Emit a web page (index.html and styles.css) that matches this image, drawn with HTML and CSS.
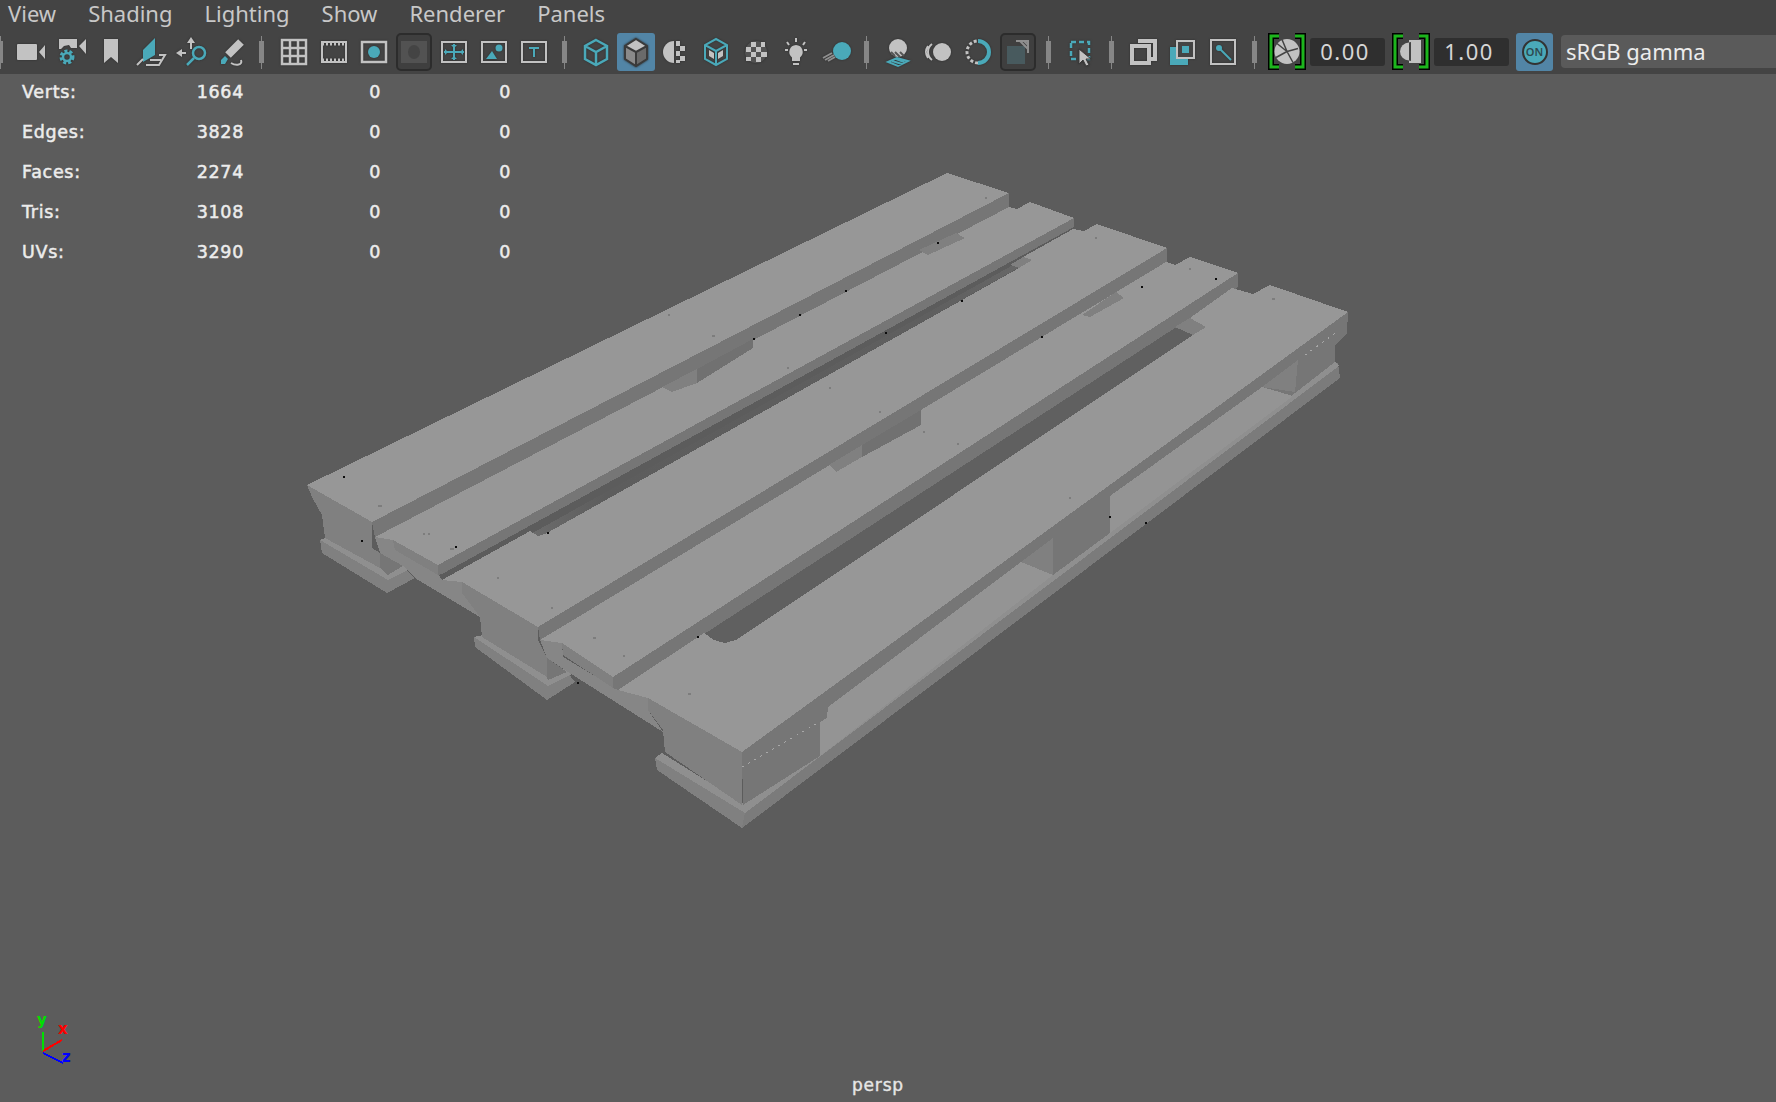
FILE: index.html
```html
<!DOCTYPE html>
<html lang="en">
<head>
    <meta charset="UTF-8">
    <title>persp</title>
    <link rel="stylesheet" href="styles.css">
</head>
<body>
    <header class="topbar">
        <nav class="menu">
            <span>View</span><span>Shading</span><span>Lighting</span><span>Show</span><span>Renderer</span><span>Panels</span>
        </nav>
        <div class="toolbar">
            <i class="sep sep-first"></i>
            <div class="group g1">
                <div class="tool"><svg viewBox="0 0 32 32"><rect class="g" x="2" y="8" width="20" height="16" rx="1"/><path class="g" d="M24 16l6-7v14z"/></svg></div>
                <div class="tool"><svg viewBox="0 0 32 32"><path class="g" d="M4 3h18v9H16l-2-3-5 1-3 3H4zM24 10l7-7v15z"/><circle class="ts gear" cx="12" cy="21" r="6"/><circle class="ts" cx="12" cy="21" r="4"/></svg></div>
                <div class="tool"><svg viewBox="0 0 32 32"><path class="g" d="M9 3h14v24l-7-6-7 6z"/></svg></div>
                <div class="tool"><svg viewBox="0 0 32 32"><path class="t" d="M8 26V14L20 2v17z"/><path class="gs thin" d="M2 29l6-6M11 29h13l6-10h-6M15 24h11"/></svg></div>
                <div class="tool"><svg viewBox="0 0 32 32"><path class="gs thin" d="M16 13V5M3 17h8"/><path class="g" d="M16 1l-4 6h8zM1 17l6-4v8z"/><circle class="ts" cx="24" cy="17" r="6"/><path class="ts" d="M19 22l-7 7"/></svg></div>
                <div class="tool"><svg viewBox="0 0 32 32"><path class="gs thick" d="M26 6L13 19"/><path class="t" d="M10 20l3 3-3 5-4 0 0-4z"/><path class="gs thin" d="M16 27c5 3 12 2 10-3"/></svg></div>
            </div>
            <i class="sep"></i>
            <div class="group g2">
                <div class="tool"><svg viewBox="0 0 32 32"><path class="gs" d="M4 4h24v24H4zM12 4v24M20 4v24M4 12h24M4 20h24"/></svg></div>
                <div class="tool"><svg viewBox="0 0 32 32"><rect class="gs thin" x="4" y="6" width="24" height="20"/><path class="gs dash" d="M4 8h24M4 24h24"/></svg></div>
                <div class="tool"><svg viewBox="0 0 32 32"><rect class="gs" x="4" y="6" width="24" height="20"/><circle class="t" cx="16" cy="16" r="6"/></svg></div>
                <div class="tool pressed"><svg viewBox="0 0 32 32"><rect class="dim" x="3" y="5" width="26" height="22"/><ellipse class="dim2" cx="16" cy="16" rx="6" ry="7"/></svg></div>
                <div class="tool"><svg viewBox="0 0 32 32"><rect class="gs thin" x="4" y="6" width="24" height="20"/><path class="ts thin" d="M16 8v16M6 16h20"/><path class="t" d="M13 9h6l-3 3zM13 23h6l-3-3zM7 13v6l3-3zM25 13v6l-3-3z"/></svg></div>
                <div class="tool"><svg viewBox="0 0 32 32"><rect class="gs thin" x="4" y="6" width="24" height="20"/><path class="t" d="M8 23l6-8 5 8z"/><circle class="t" cx="21" cy="12" r="3.5"/></svg></div>
                <div class="tool"><svg viewBox="0 0 32 32"><rect class="gs thin" x="4" y="6" width="24" height="20"/><path class="ts thin" d="M11 12h10M16 12v9"/></svg></div>
            </div>
            <i class="sep"></i>
            <div class="group g3">
                <div class="tool"><svg viewBox="0 0 32 32"><path class="ts" d="M16 4l11 6v13l-11 6-11-6V10zM5 10l11 6 11-6M16 16v13"/></svg></div>
                <div class="tool selected"><svg viewBox="0 0 32 32"><path class="cube-r" d="M16 16l11-6v13l-11 7z"/><path class="cube-l" d="M16 16L5 10v13l11 7z"/><path class="g" d="M16 3l11 7-11 6-11-6z"/><path class="outline" d="M16 3l11 7v13l-11 7-11-7V10zM5 10l11 6 11-6M16 16v14"/></svg></div>
                <div class="tool"><svg viewBox="0 0 32 32"><path class="g" d="M14 5A11 11 0 0 0 14 27z"/><path class="g" d="M16 5h4v5h-4zM20 10h5v5h-5zM16 15h4v5h-4zM20 20h5v5h-5zM16 24h4v3h-4z"/></svg></div>
                <div class="tool"><svg viewBox="0 0 32 32"><path class="ts thin" d="M16 3l11 6v14l-11 6-11-6V9zM5 9l11 6 11-6M16 15v14"/><path class="g" d="M9 14l5 3v6l-5-3zM23 14l-5 3v6l5-3z"/></svg></div>
                <div class="tool"><svg viewBox="0 0 32 32"><circle class="dim" cx="16" cy="16" r="11"/><path class="g" d="M11 6h5v5h-5zM21 6h4v5h-4zM6 11h5v5H6zM16 11h5v5h-5zM11 16h5v5h-5zM21 16h6v5h-6zM6 21h5v4H6zM16 21h5v5h-5z"/></svg></div>
                <div class="tool"><svg viewBox="0 0 32 32"><path class="g" d="M16 9a7 7 0 0 0-4 12.500V25h8v-3.500A7 7 0 0 0 16 9zM13 27h6v2h-6z"/><path class="gs thin" d="M16 2v4M5 14h3M24 14h3M7 6l2 3M25 6l-2 3"/></svg></div>
                <div class="tool"><svg viewBox="0 0 32 32"><circle class="t" cx="22" cy="15" r="9"/><path class="hatch" d="M3 22l9-5M5 24l9-5M8 25l7-4"/></svg></div>
            </div>
            <i class="sep"></i>
            <div class="group g4">
                <div class="tool"><svg viewBox="0 0 32 32"><circle class="g" cx="16" cy="12" r="9"/><path class="hatch dark" d="M9 16l4 4M13 16l5 5M18 16l4 4"/><path class="ts thin" d="M6 26l9-4 11 3-10 5zM10 25l10 3M14 23l8 3"/></svg></div>
                <div class="tool"><svg viewBox="0 0 32 32"><circle class="g" cx="20" cy="16" r="9"/><path class="gs thin" d="M10 8a10 10 0 0 0 0 16M6 10a10 10 0 0 0 0 12"/></svg></div>
                <div class="tool"><svg viewBox="0 0 32 32"><path class="ts heavy" d="M16 5a11 11 0 0 1 0 22"/><path class="gs dashed" d="M16 27a11 11 0 0 1 0-22"/></svg></div>
                <div class="tool pressed"><svg viewBox="0 0 32 32"><rect class="dim-t" x="5" y="10" width="18" height="18"/><path class="hatch" d="M14 5h12v12M18 5l8 8M22 5l4 4"/></svg></div>
            </div>
            <i class="sep"></i>
            <div class="group g5">
                <div class="tool"><svg viewBox="0 0 32 32"><path class="ts dash-box" d="M6 6h18v17H6z"/><path class="g cursor" d="M14 13l0 15 4-4 3 6 3-1-3-6h5z"/></svg></div>
            </div>
            <i class="sep"></i>
            <div class="group g6">
                <div class="tool"><svg viewBox="0 0 32 32"><path class="gs heavy" d="M11 5h17v18h-4"/><path class="gs heavy" d="M5 10h17v17H5z"/></svg></div>
                <div class="tool"><svg viewBox="0 0 32 32"><rect class="t" x="3" y="11" width="18" height="18"/><rect class="base" x="10" y="5" width="17" height="17"/><path class="gs thin" d="M10 5h17v17H10z"/><rect class="t" x="15" y="10" width="7" height="7"/></svg></div>
                <div class="tool"><svg viewBox="0 0 32 32"><rect class="gs thin" x="4" y="4" width="24" height="24"/><circle class="t" cx="12" cy="12" r="3"/><path class="ts thin" d="M13 13l11 11"/></svg></div>
            </div>
            <i class="sep sep-last"></i>
            <div class="bracket b1"><svg viewBox="0 0 38 37"><path class="green-edge" d="M11 3H3v31h8M27 3h8v31h-8"/><path class="green" d="M11 3H3v31h8M27 3h8v31h-8"/><circle class="g" cx="19" cy="18.500" r="12.500"/><path class="blades" d="M19 18.500l-5-12M19 18.500l11-3M19 18.500l6 11M19 18.500l-11 6M19 18.500l-10-8"/></svg></div>
            <div class="field">0.00</div>
            <div class="bracket b2"><svg viewBox="0 0 38 37"><path class="green-edge" d="M11 3H3v31h8M27 3h8v31h-8"/><path class="green" d="M11 3H3v31h8M27 3h8v31h-8"/><path class="g" d="M17 7h12v23H17z"/><path class="half-fill" d="M19 9a9.500 9.500 0 0 0 0 19z"/><path class="g" d="M8 18.500a9 9 0 0 1 9-9v18a9 9 0 0 1-9-9z"/></svg></div>
            <div class="field">1.00</div>
            <div class="on-button"><span class="on-disc">ON</span></div>
            <div class="space-field">sRGB gamma</div>
        </div>
    </header>

    <main class="viewport">
        <svg class="scene" viewBox="0 72 1776 1028">
            <defs>
                <linearGradient id="gapShade" gradientUnits="userSpaceOnUse" x1="530" y1="0" x2="1030" y2="0">
                    <stop offset="0" stop-color="#6c6c6c"/>
                    <stop offset="0.15" stop-color="#5d5d5d"/>
                    <stop offset="0.8" stop-color="#5f5f5f"/>
                    <stop offset="1" stop-color="#686868"/>
                </linearGradient>
            </defs>
            <!-- feet and blocks at the near end -->
            <polygon class="foot-face" points="320,540 322,553 387,593 415,578 403,567 388,574"/>
            <polygon class="foot-top" points="320,540 325,538 388,568 403,563 408,570 388,580"/>
            <polygon class="face" points="307,485 312,497 322,515 325,538 380,568 380,553 372,548 372,522"/>
            <polygon class="band" points="380,553 403,566 388,575 380,568"/>

            <polygon class="foot-face" points="474,637 475,647 547,700 575,682 567,672 548,680 483,637"/>
            <polygon class="foot-top" points="474,637 483,635 548,674 567,668 572,674 548,686"/>
            <polygon class="strip" points="375,537 393,540 395,550 439,575 442,580 462,582 463,595 480,607 480,617 415,578 403,566 380,553"/>
            <polygon class="face" points="393,540 438,565 438,575 395,550"/>
            <polygon class="face" points="462,582 538,627 538,640 547,658 547,677 482,637 480,617 462,593"/>
            <polygon class="band" points="547,658 567,672 548,680 547,677"/>

            <polygon class="strip" points="540,640 562,643 563,657 615,688 618,690 648,698 648,710 663,732 568,672 547,658"/>
            <polygon class="face" points="562,643 613,677 613,688 563,655"/>

            <!-- long runner on the near side -->
            <polygon class="band-out" points="1338,363 1340,378 742,828 745,807"/>
            <polygon class="foot-face" points="655,758 657,770 742,828 745,812"/>
            <polygon class="foot-top" points="655,758 662,753 742,803 1335,361 1339,366 745,813"/>
            <polygon class="face" points="648,698 742,752 742,805 665,752 663,730 648,710"/>
            <polygon class="band" points="742,752 1348,312 1347,333 1335,345 1335,362 1295,393 1110,533 1053,575 1021,562 828,707 827,718 820,722 820,756 743,805"/>
            <polygon class="slab" points="1110,496 1262,387 1293,396 1110,533"/>
            <polygon class="slab" points="1021,562 1053,575 820,756 820,722 827,718 828,707"/>
            <polygon class="patch" points="1053,538 1053,575 1021,562"/>
            <polygon class="patch" points="1298,360 1295,392 1262,387"/>

            <!-- gaps between the deck boards -->
            <polygon class="gap" points="520,540 1040,250 1032,260 547,533 538,536 530,531"/>
            <polygon class="gap2" points="690,633 1238,287 1206,327 1193,335 736,640 725,643 714,640 704,633"/>
            <polygon class="band" points="372,522 1009,193 1009,207 375,537"/>
            <polygon class="band" points="438,565 1074,218 1074,227 442,574 438,575"/>
            <polygon class="band" points="538,627 1167,248 1167,262 540,640"/>
            <polygon class="band" points="613,677 1238,273 1238,287 618,690 613,688"/>

            <!-- deck board tops -->
            <polygon class="top" points="307,485 947,173 1009,193 372,522"/>
            <polygon class="top" points="375,537 1009,207 1017,209 1030,202 1074,218 438,565 393,540"/>
            <polygon class="top" points="442,580 530,531 538,536 547,533 1019,268 1032,260 1023,257 1073,229 1084,231 1097,224 1167,248 538,627 462,582"/>
            <polygon class="top" points="540,640 1166,262 1175,265 1190,257 1238,273 613,677 562,643"/>
            <polygon class="top" points="618,690 704,633 714,640 725,643 736,640 1193,335 1206,327 1190,318 1232,288 1253,294 1270,285 1348,312 742,752 648,698"/>

            <!-- block tops showing through the gaps -->
            <polygon class="patch" points="662,387 697,369 697,383 672,392"/>
            <polygon class="block" points="697,369 753,339 753,348 697,383"/>
            <polygon class="patch" points="919,250 956,233 965,238 928,255"/>
            <polygon class="patch" points="1010,265 1023,257 1032,260 1019,268"/>
            <polygon class="patch" points="1082,315 1116,292 1124,298 1090,317"/>
            <polygon class="block" points="921,410 921,425 862,457 862,445"/>
            <polygon class="patch" points="862,445 862,457 836,472 829,465"/>
            <polygon class="patch" points="1175,327 1190,318 1206,327 1193,335"/>

            <path class="nick" d="M742 767l76-44M1305 355l33-24"/>
            <path class="specks" d="M985 197h2v2h-2zM787 367h2v2h-2zM829 387h2v2h-2zM1095 237h2v2h-2zM1189 268h2v2h-2zM1272 298h3v2h-3zM879 411h2v2h-2zM923 431h2v2h-2zM957 443h2v2h-2zM712 335h3v2h-3zM378 505h4v2h-4zM423 533h2v2h-2zM428 533h2v2h-2zM450 548h4v2h-4zM497 577h2v2h-2zM551 607h2v2h-2zM593 637h3v2h-3zM623 655h2v2h-2zM688 693h3v2h-3zM1069 497h2v2h-2zM668 314h2v2h-2z"/>
            <path class="dots" d="M343 476h2v2h-2zM361 540h2v2h-2zM455 546h2v2h-2zM547 532h2v2h-2zM753 338h2v2h-2zM799 314h2v2h-2zM577 682h2v2h-2zM697 636h2v2h-2zM937 242h2v2h-2zM845 290h2v2h-2zM961 300h2v2h-2zM885 332h2v2h-2zM1041 336h2v2h-2zM1141 286h2v2h-2zM1215 278h2v2h-2zM1109 516h2v2h-2zM1145 522h2v2h-2z"/>

            <!-- view axis -->
            <path class="axis-y" d="M43 1032v19"/>
            <path class="axis-x" d="M43 1051l19-11"/>
            <path class="axis-z" d="M43 1053l20 10"/>
            <text class="axis-label axis-y-label" x="37" y="1025">y</text>
            <text class="axis-label axis-x-label" x="58" y="1034">x</text>
            <text class="axis-label axis-z-label" x="62" y="1062">z</text>
        </svg>

        <div class="stats">
            <span>Verts:</span><span>1664</span><span>0</span><span>0</span>
            <span>Edges:</span><span>3828</span><span>0</span><span>0</span>
            <span>Faces:</span><span>2274</span><span>0</span><span>0</span>
            <span>Tris:</span><span>3108</span><span>0</span><span>0</span>
            <span>UVs:</span><span>3290</span><span>0</span><span>0</span>
        </div>
        <div class="cam-name">persp</div>
    </main>
</body>
</html>
```

FILE: styles.css
```css
html, body {
    margin: 0;
    height: 100%;
    overflow: hidden;
    background: #5c5c5c;
}
.topbar {
    height: 74px;
    background: #444444;
    position: relative;
    z-index: 2;
    overflow: hidden;
}
.menu {
    display: flex;
    gap: 32px;
    height: 29px;
    padding-left: 8px;
    font-family: "Noto Sans", sans-serif;
    font-size: 22px;
    line-height: 27px;
    color: #c8c8c8;
}
.toolbar {
    display: flex;
    align-items: center;
    height: 45px;
}
.group {
    display: flex;
}
.g2 { margin-left: 10px; }
.g3 { margin-left: 9px; }
.g4 { margin-left: 9px; }
.g5 { margin-left: 10px; }
.g6 { margin-left: 9px; }
.tool {
    width: 40px;
    height: 38px;
    display: flex;
    align-items: center;
    justify-content: center;
    box-sizing: border-box;
}
.tool svg {
    width: 32px;
    height: 32px;
    filter: drop-shadow(0 0 1px #2c2c2c);
}
.selected {
    background: #5285a6;
    border-radius: 3px;
    margin: 0 1px;
    width: 38px;
}
.pressed {
    margin: 0 2px;
    width: 36px;
    border: 2px solid #2c2c2c;
    border-radius: 5px;
    background: #3f3f3f;
}
.pressed svg {
    filter: none;
}
.sep {
    display: block;
    flex: none;
    width: 5px;
    height: 22px;
    margin-left: 8px;
    margin-right: 0;
    background: #868686;
    position: relative;
}
.sep::before {
    content: "";
    position: absolute;
    left: 2px;
    top: -5px;
    width: 1px;
    height: 33px;
    background: #868686;
}
.sep-first {
    margin-left: -2px;
    margin-right: 8px;
}
.sep-last {
    margin-left: 9px;
}

/* fill and stroke styles for the icons */
.g { fill: #c2c2c2; }
.t { fill: #4aa9b9; }
.gs, .ts, .hatch, .outline, .green, .green-edge, .blades, .nick {
    fill: none;
}
.gs { stroke: #c2c2c2; stroke-width: 2.5; }
.ts { stroke: #4aa9b9; stroke-width: 2.5; }
.thin { stroke-width: 2; }
.thick { stroke-width: 8; }
.heavy { stroke-width: 4; }
.gear { stroke-dasharray: 3 2; stroke-width: 3; }
.dash { stroke-width: 3; stroke-dasharray: 2 2; }
.dashed { stroke-dasharray: 3 2; stroke-width: 3; }
.dash-box { stroke-dasharray: 5 3; }
.hatch { stroke: #8f8f8f; stroke-width: 2; }
.hatch.dark { stroke: #555555; }
.dim { fill: #525252; }
.dim2 { fill: #444444; }
.dim-t { fill: #485a5e; }
.base { fill: #444444; }
.half-fill { fill: #444444; }
.cube-r { fill: #6a6a6a; }
.cube-l { fill: #8a8a8a; }
.outline { stroke: #3a3a3a; stroke-width: 2; }
.cursor { stroke: #3a3a3a; stroke-width: 1; }
.green { stroke: #1db51d; stroke-width: 3; }
.green-edge { stroke: #000000; stroke-width: 6; }
.blades { stroke: #444444; stroke-width: 1.5; }

.bracket {
    width: 38px;
    height: 37px;
    flex: none;
}
.bracket svg {
    width: 38px;
    height: 37px;
    display: block;
}
.b1 { margin-left: 11px; }
.b2 { margin-left: 7px; }
.field {
    width: 75px;
    height: 28px;
    margin-left: 4px;
    box-sizing: border-box;
    padding-right: 5px;
    background: #2f2f2f;
    border-radius: 3px;
    font-family: "Noto Sans", sans-serif;
    font-size: 22px;
    letter-spacing: 1.5px;
    line-height: 27px;
    text-align: center;
    color: #d6d6d6;
}
.on-button {
    width: 37px;
    height: 38px;
    margin-left: 7px;
    background: #5285a6;
    border-radius: 3px;
    display: flex;
    align-items: center;
    justify-content: center;
    flex: none;
}
.on-disc {
    width: 26px;
    height: 26px;
    box-sizing: border-box;
    border: 2px solid #333333;
    border-radius: 50%;
    background: #4aa9b9;
    font-family: "Noto Sans", sans-serif;
    font-size: 11px;
    font-weight: 600;
    line-height: 22px;
    text-align: center;
    color: #2e4a50;
}
.space-field {
    flex: 1;
    height: 33px;
    margin-left: 8px;
    padding-left: 5px;
    background: #5a5a5a;
    border-radius: 4px 0 0 4px;
    font-family: "Noto Sans", sans-serif;
    font-size: 22px;
    line-height: 32px;
    color: #ececec;
}

.viewport {
    position: relative;
    height: 1028px;
    background: #5c5c5c;
}
.scene {
    position: absolute;
    left: 0;
    top: 0;
    width: 1776px;
    height: 1028px;
    shape-rendering: crispEdges;
}
.top { fill: #979797; }
.band { fill: #767676; }
.band-out { fill: #7b7b7b; }
.face { fill: #808080; }
.foot-face { fill: #808080; }
.foot-top { fill: #8f8f8f; }
.strip { fill: #868686; }
.slab { fill: #949494; }
.patch { fill: #808080; }
.block { fill: #717171; }
.gap { fill: url(#gapShade); }
.gap2 { fill: #606060; }
.nick { stroke: #a8a8a8; stroke-width: 1; stroke-dasharray: 2 5; }
.specks { fill: #7d7d7d; }
.dots { fill: #0c0c0c; }
.axis-y, .axis-x, .axis-z { fill: none; stroke-width: 2; }
.axis-y { stroke: #00e000; }
.axis-x { stroke: #ff0000; }
.axis-z { stroke: #0000ff; }
.axis-label {
    font-family: "DejaVu Sans", sans-serif;
    font-size: 15px;
    font-weight: bold;
}
.axis-y-label { fill: #00e000; }
.axis-x-label { fill: #ff0000; }
.axis-z-label { fill: #0000ff; }

.stats {
    position: relative;
    margin-top: -2px;
    padding-left: 22px;
    display: grid;
    grid-template-columns: 78px 144px 137px 130px;
    grid-auto-rows: 40px;
    font-family: "DejaVu Sans", sans-serif;
    font-size: 17.500px;
    letter-spacing: 0.7px;
    line-height: 40px;
    color: #ececec;
    -webkit-text-stroke: 0.5px #ececec;
}
.stats span {
    text-align: right;
}
.stats span:nth-child(4n+1) {
    text-align: left;
}
.cam-name {
    position: absolute;
    left: 852px;
    top: 1003px;
    font-family: "DejaVu Sans", sans-serif;
    font-size: 17px;
    letter-spacing: 0.8px;
    line-height: 20px;
    color: #e6e6e6;
    -webkit-text-stroke: 0.4px #e6e6e6;
}
```
